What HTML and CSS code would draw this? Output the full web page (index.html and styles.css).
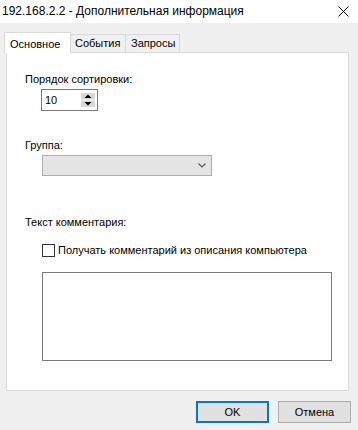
FILE: index.html
```html
<!DOCTYPE html>
<html lang="ru">
<head>
<meta charset="utf-8">
<title>192.168.2.2 - Дополнительная информация</title>
<link rel="stylesheet" href="styles.css">
</head>
<body>
<div class="window">
  <div class="titlebar">
    <span class="title">192.168.2.2 - Дополнительная информация</span>
    <svg class="close" width="11" height="11" viewBox="0 0 11 11"><path d="M0.5 0.5 L10.5 10.5 M10.5 0.5 L0.5 10.5" stroke="#000" stroke-width="1"/></svg>
  </div>
  <div class="tabs">
    <div class="tab active">Основное</div>
    <div class="tab">События</div>
    <div class="tab">Запросы</div>
  </div>
  <div class="panel">
    <div class="label">Порядок сортировки:</div>
    <div class="spinner">
      <span class="spin-value">10</span>
      <svg class="spin-btns" width="14" height="14" viewBox="0 0 14 14">
        <rect x="0" y="0" width="14" height="6.5" fill="#d8d8d8"/>
        <rect x="0" y="7.5" width="14" height="6.5" fill="#d8d8d8"/>
        <path d="M3.5 5 L7 1.5 L10.5 5 Z" fill="#000"/>
        <path d="M3.5 9 L7 12.5 L10.5 9 Z" fill="#000"/>
      </svg>
    </div>
    <div class="label group-label">Группа:</div>
    <div class="combo">
      <svg class="chevron" width="8" height="5" viewBox="0 0 8 5"><path d="M0.5 0.5 L4 4 L7.5 0.5" stroke="#555" stroke-width="1.1" fill="none"/></svg>
    </div>
    <div class="label comment-label">Текст комментария:</div>
    <label class="check-row">
      <span class="checkbox"></span>
      <span>Получать комментарий из описания компьютера</span>
    </label>
    <div class="memo"></div>
  </div>
  <div class="footer">
    <button class="btn default">OK</button>
    <button class="btn">Отмена</button>
  </div>
</div>
</body>
</html>
```
FILE: styles.css
```css
html, body {
  margin: 0;
  padding: 0;
}
body {
  width: 358px;
  height: 430px;
  background: #f0f0f0;
  font-family: "Liberation Sans", Arial, sans-serif;
  font-size: 11px;
  color: #000;
  overflow: hidden;
}
.window {
  display: flex;
  flex-direction: column;
  height: 430px;
}
.titlebar {
  height: 23px;
  background: #fff;
  display: flex;
  align-items: center;
  justify-content: space-between;
  padding: 0 9px 0 2px;
  font-size: 12px;
  box-sizing: border-box;
}
.title {
  margin-top: -1px;
  color: #000;
}
.close {
  margin-top: -1px;
}
.tabs {
  display: flex;
  align-items: flex-end;
  margin-top: 9px;
  padding-left: 4px;
  height: 20px;
  position: relative;
  z-index: 1;
}
.tab {
  height: 18px;
  line-height: 17px;
  padding: 0 4px;
  border: 1px solid #d9d9d9;
  border-bottom: none;
  border-left: none;
  background: #f0f0f0;
  box-sizing: border-box;
}
.tab.active {
  height: 21px;
  margin-bottom: -1px;
  background: #fff;
  border-left: 1px solid #d9d9d9;
  padding: 0 5px 0 5px;
  line-height: 22px;
  width: 67px;
}
.tab:nth-child(2) {
  width: 55px;
}
.tab:nth-child(3) {
  width: 54px;
  padding-left: 5px;
}
.panel {
  margin-left: 6px;
  width: 343px;
  height: 339px;
  box-sizing: border-box;
  background: #fff;
  border: 1px solid #d9d9d9;
  padding: 19px 0 0 18px;
}
.label {
  line-height: 14px;
  height: 14px;
}
.spinner {
  margin: 3px 0 0 16px;
  width: 57px;
  height: 22px;
  box-sizing: border-box;
  border: 1px solid #7a7a7a;
  display: flex;
  align-items: center;
  justify-content: space-between;
  padding: 0 2px 0 3px;
}
.spin-value {
  line-height: 14px;
}
.spin-btns {
  display: block;
}
.group-label {
  margin-top: 27px;
}
.combo {
  margin: 3px 0 0 17px;
  width: 170px;
  height: 21px;
  box-sizing: border-box;
  background: #e5e5e5;
  border: 1px solid #adadad;
  display: flex;
  align-items: center;
  justify-content: flex-end;
  padding-right: 5px;
}
.chevron {
  display: block;
}
.comment-label {
  margin-top: 39px;
}
.check-row {
  margin: 14px 0 0 17px;
  display: flex;
  align-items: center;
  height: 14px;
  line-height: 14px;
}
.checkbox {
  width: 13px;
  height: 13px;
  box-sizing: border-box;
  border: 1px solid #333;
  background: #fff;
  margin-right: 3px;
}
.memo {
  margin: 15px 0 0 17px;
  width: 290px;
  height: 89px;
  box-sizing: border-box;
  border: 1px solid #7a7a7a;
  background: #fff;
}
.footer {
  display: flex;
  justify-content: flex-end;
  gap: 9px;
  padding: 10px 7px 0 0;
}
.btn {
  width: 73px;
  height: 22px;
  box-sizing: border-box;
  background: #e1e1e1;
  border: 1px solid #adadad;
  font-family: "Liberation Sans", Arial, sans-serif;
  font-size: 11px;
  color: #000;
  padding: 0;
  margin: 0;
}
.btn.default {
  border: 2px solid #0078d7;
}
```
